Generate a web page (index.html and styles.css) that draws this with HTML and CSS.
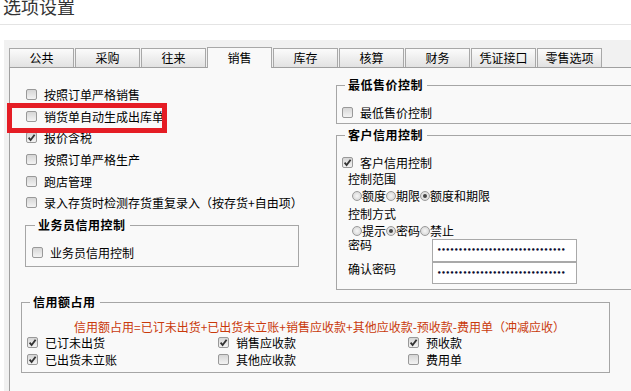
FILE: index.html
```html
<!DOCTYPE html>
<html lang="zh-CN">
<head>
<meta charset="utf-8">
<title>选项设置</title>
<link rel="stylesheet" href="styles.css">
</head>
<body>
<div class="title">选项设置</div>
<div class="shell">
  <div class="tabs">
    <div class="tab">公共</div>
    <div class="tab">采购</div>
    <div class="tab">往来</div>
    <div class="tab active">销售</div>
    <div class="tab">库存</div>
    <div class="tab">核算</div>
    <div class="tab">财务</div>
    <div class="tab">凭证接口</div>
    <div class="tab">零售选项</div>
  </div>
  <div class="panel">
    <div class="top">
      <div class="left">
        <div class="list">
          <div class="row"><span class="cb"></span><span>按照订单严格销售</span></div>
          <div class="row"><span class="cb"></span><span>销货单自动生成出库单</span></div>
          <div class="row"><span class="cb on"><svg viewBox="0 0 9 9" width="9" height="9"><path d="M1.6 4.6 L3.6 7 L7.6 1.8" fill="none" stroke="#333" stroke-width="1.8"/></svg></span><span>报价含税</span></div>
          <div class="row"><span class="cb"></span><span>按照订单严格生产</span></div>
          <div class="row"><span class="cb"></span><span>跑店管理</span></div>
          <div class="row"><span class="cb"></span><span>录入存货时检测存货重复录入（按存货+自由项）</span></div>
        </div>
        <div class="group g-sales">
          <div class="gt">业务员信用控制</div>
          <div class="line l-sales"><span class="cb"></span><span>业务员信用控制</span></div>
        </div>
      </div>
      <div class="right">
        <div class="group g-min">
          <div class="gt">最低售价控制</div>
          <div class="line l-min"><span class="cb"></span><span>最低售价控制</span></div>
        </div>
        <div class="group g-cust">
          <div class="gt">客户信用控制</div>
          <div class="line c1"><span class="cb on"><svg viewBox="0 0 9 9" width="9" height="9"><path d="M1.6 4.6 L3.6 7 L7.6 1.8" fill="none" stroke="#333" stroke-width="1.8"/></svg></span><span>客户信用控制</span></div>
          <div class="line lab c2">控制范围</div>
          <div class="line radios c3"><span class="rd"></span>额度<span class="rd"></span>期限<span class="rd on"></span>额度和期限</div>
          <div class="line lab c4">控制方式</div>
          <div class="line radios c5"><span class="rd"></span>提示<span class="rd on"></span>密码<span class="rd"></span>禁止</div>
          <div class="pw p1"><span class="pl">密码</span><span class="inp"><span class="dots">••••••••••••••••••••••••••••••</span></span></div>
          <div class="pw p2"><span class="pl">确认密码</span><span class="inp"><span class="dots">••••••••••••••••••••••••••••••</span></span></div>
        </div>
      </div>
    </div>
    <div class="group g-credit">
      <div class="gt">信用额占用</div>
      <div class="formula">信用额占用=已订未出货+已出货未立账+销售应收款+其他应收款-预收款-费用单（冲减应收）</div>
      <div class="cgrid">
        <div class="line"><span class="cb on"><svg viewBox="0 0 9 9" width="9" height="9"><path d="M1.6 4.6 L3.6 7 L7.6 1.8" fill="none" stroke="#333" stroke-width="1.8"/></svg></span><span>已订未出货</span></div>
        <div class="line"><span class="cb on"><svg viewBox="0 0 9 9" width="9" height="9"><path d="M1.6 4.6 L3.6 7 L7.6 1.8" fill="none" stroke="#333" stroke-width="1.8"/></svg></span><span>已出货未立账</span></div>
        <div class="line"><span class="cb on"><svg viewBox="0 0 9 9" width="9" height="9"><path d="M1.6 4.6 L3.6 7 L7.6 1.8" fill="none" stroke="#333" stroke-width="1.8"/></svg></span><span>销售应收款</span></div>
        <div class="line"><span class="cb"></span><span>其他应收款</span></div>
        <div class="line"><span class="cb on"><svg viewBox="0 0 9 9" width="9" height="9"><path d="M1.6 4.6 L3.6 7 L7.6 1.8" fill="none" stroke="#333" stroke-width="1.8"/></svg></span><span>预收款</span></div>
        <div class="line"><span class="cb"></span><span>费用单</span></div>
      </div>
    </div>
  </div>
</div>
<div class="highlight"></div>
</body>
</html>
```
FILE: styles.css
```css
html, body {
  margin: 0;
  padding: 0;
}
body {
  width: 631px;
  height: 391px;
  overflow: hidden;
  background: #ffffff;
  font-family: "Noto Sans CJK SC", "Noto Sans", sans-serif;
  font-size: 12px;
  color: #000;
  position: relative;
}
.title {
  height: 24px;
  border-bottom: 1px solid #e4e4e4;
  font-size: 18px;
  line-height: 13px;
  color: #333;
  padding-left: 3px;
}
.shell {
  margin-top: 15px;
  margin-left: 4px;
  width: 700px;
  background: #f1f1f1;
  padding: 8px 0 0 5px;
}
.tabs {
  display: flex;
  align-items: flex-start;
  height: 19px;
}
.tab {
  width: 65px;
  height: 19px;
  box-sizing: border-box;
  margin-right: 1px;
  border: 1px solid #a8a8a8;
  border-bottom: none;
  background: linear-gradient(#fbfbfb, #e2e2e2);
  text-align: center;
  line-height: 18px;
  flex: none;
}
.tab.active {
  margin-top: -1px;
  height: 21px;
  line-height: 19px;
  background: #f9f9f9;
  position: relative;
  z-index: 1;
}
.panel {
  border-top: 1px solid #a0a0a0;
  border-left: 1px solid #a0a0a0;
  background: #f9f9f9;
  height: 330px;
}
.top {
  display: grid;
  grid-template-columns: 326px 320px;
  align-items: start;
}
.list {
  padding: 16px 0 0 16px;
}
.row {
  display: flex;
  align-items: center;
  height: 21.6px;
}
.line {
  display: flex;
  align-items: center;
  height: 16px;
}
.cb {
  width: 11px;
  height: 11px;
  box-sizing: border-box;
  border: 1px solid #999;
  border-radius: 2px;
  background: linear-gradient(#d6d6d6, #f3f3f3);
  margin-right: 7px;
  flex: none;
  display: flex;
  align-items: center;
  justify-content: center;
}
.cb svg {
  display: block;
}
.rd {
  width: 10px;
  height: 10px;
  box-sizing: border-box;
  border: 1px solid #9a9a9a;
  border-radius: 50%;
  background: radial-gradient(#f6f6f6, #d0d0d0);
  margin-right: 0;
  flex: none;
  display: flex;
  align-items: center;
  justify-content: center;
}
.rd.on::after {
  content: "";
  width: 4px;
  height: 4px;
  border-radius: 50%;
  background: #444;
}
.group {
  border: 1px solid #a6a6a6;
  box-sizing: border-box;
}
.gt {
  width: fit-content;
  margin: -9px 0 0 3px;
  padding: 0 4px 0 3px;
  background: #f9f9f9;
  font-weight: bold;
  font-size: 12px;
  letter-spacing: 0.5px;
  line-height: 16px;
  height: 16px;
}
.g-sales {
  margin: 11.4px 0 0 15px;
  width: 274px;
  padding: 0 0 5px 6px;
}
.l-sales {
  margin-top: 12px;
}
.g-min {
  margin-top: 17px;
  width: 320px;
  padding: 0 0 3px 5px;
}
.l-min {
  margin-top: 11px;
}
.g-cust {
  margin-top: 11px;
  width: 320px;
  padding: 0 0 5px 5px;
}
.c1 { margin-top: 12px; height: 15px; }
.c2 { height: 16px; }
.c3 { height: 19px; }
.c4 { height: 17px; }
.c5 { height: 17px; }
.lab { padding-left: 6px; }
.radios { padding-left: 10px; }
.pw {
  display: flex;
  align-items: flex-start;
}
.p1 { height: 23px; }
.p2 { height: 22px; }
.pl {
  width: 84px;
  padding-left: 6px;
  line-height: 12px;
  flex: none;
}
.p2 .pl { padding-top: 1px; }
.inp {
  width: 145px;
  height: 100%;
  box-sizing: border-box;
  border: 1px solid #a9a9a9;
  background: #fff;
  display: flex;
  align-items: center;
  padding-left: 4px;
  flex: none;
}
.dots {
  font-family: "DejaVu Sans", sans-serif;
  font-size: 7px;
  font-weight: bold;
  line-height: 7px;
  color: #0c0c30;
  letter-spacing: -0.2px;
}
.g-credit {
  margin: 12px 0 0 11px;
  width: 589px;
  padding: 0 0 4px 5px;
}
.formula {
  margin-top: 10px;
  height: 14px;
  line-height: 14px;
  padding-left: 47px;
  color: #c93a0c;
  white-space: nowrap;
}
.cgrid {
  display: grid;
  grid-template-columns: 191px 190px auto;
  grid-template-rows: 17px 17px;
  grid-auto-flow: column;
}
.cgrid .line {
  height: 17px;
}
.highlight {
  position: absolute;
  left: 7px;
  top: 103px;
  width: 160px;
  height: 30px;
  box-sizing: border-box;
  border: 5px solid #e51d25;
}
```
